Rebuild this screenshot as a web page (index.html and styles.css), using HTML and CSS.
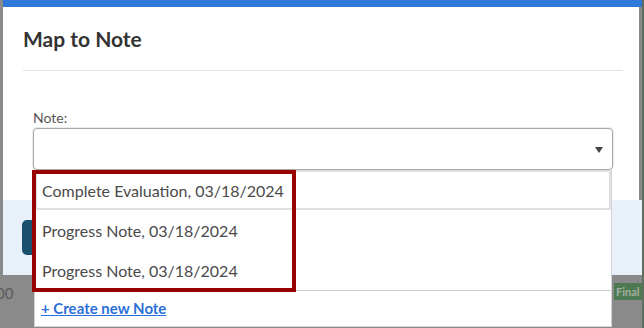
FILE: index.html
```html
<!DOCTYPE html>
<html>
<head>
<meta charset="utf-8">
<link rel="stylesheet" href="styles.css">
</head>
<body>
<div class="page">
  <div class="modal">
    <div class="topbar"></div>
    <div class="header"><h2 class="title">Map to Note</h2></div>
    <div class="content">
      <label class="label">Note:</label>
      <div class="select-wrap">
        <div class="select"><span class="arrow"></span></div>
        <div class="dropdown">
          <ul class="options">
            <li class="option active">Complete Evaluation, 03/18/2024</li>
            <li class="option">Progress Note, 03/18/2024</li>
            <li class="option">Progress Note, 03/18/2024</li>
          </ul>
          <div class="create"><a class="create-link" href="#">+ Create new Note</a></div>
          <div class="callout"></div>
        </div>
      </div>
    </div>
    <div class="footer"><span class="btn"></span></div>
  </div>
  <span class="bg-text">00</span>
  <span class="bg-badge">Final</span>
</div>
</body>
</html>
```

FILE: styles.css
```css
* { box-sizing: border-box; }
html, body { margin: 0; padding: 0; }
body {
  width: 644px;
  height: 328px;
  overflow: hidden;
  background: #8a8a8a;
  font-family: Lato, "Open Sans", sans-serif;
}
.page {
  position: relative;
  display: flex;
  height: 328px;
  padding-left: 3px;
  border-right: 2px solid #5f6f5f;
}
.modal {
  width: 636px;
  height: 275px;
  background: #fff;
  display: flex;
  flex-direction: column;
}
.topbar {
  height: 7px;
  background: #2f77d8;
  margin-right: -3px;
}
.header {
  margin: 0 16px 0 20px;
  padding: 19px 0 19px;
  border-bottom: 1px solid #e3e3e3;
}
.title {
  margin: 0;
  font-size: 21px;
  line-height: 25px;
  font-weight: 700;
  color: #333;
}
.content {
  padding: 38px 26px 30px 30px;
}
.label {
  display: block;
  font-size: 14px;
  line-height: 17px;
  color: #555;
  margin-bottom: 2px;
}
.select-wrap {
  position: relative;
  z-index: 2;
}
.select {
  height: 42px;
  border: 1px solid #a8a8a8;
  border-radius: 4px;
  box-shadow: 0 0 0 1px #ececec;
  display: flex;
  align-items: center;
  justify-content: flex-end;
  padding-right: 9px;
  background: #fff;
}
.arrow {
  width: 0;
  height: 0;
  border-left: 4px solid transparent;
  border-right: 4px solid transparent;
  border-top: 6px solid #444;
  margin-top: 2px;
}
.dropdown {
  position: absolute;
  top: 100%;
  left: 1px;
  right: 1px;
  height: 157px;
  background: #fff;
  border: 1px solid #d4d4d4;
  border-top: none;
}
.options {
  list-style: none;
  margin: 0;
  padding: 0;
}
.option {
  height: 40px;
  display: flex;
  align-items: center;
  padding-left: 5px;
  border: 2px solid transparent;
  font-size: 16px;
  line-height: 19px;
  color: #4a4a4a;
}
.option.active {
  border-color: #e0e0e0;
}
.create {
  border-top: 1px solid #cfcfcf;
  padding: 8px 6px;
  font-size: 15px;
  line-height: 18px;
}
.create-link {
  color: #2c6fd8;
  font-weight: 700;
  text-decoration: underline;
}
.callout {
  position: absolute;
  left: -3px;
  top: 0;
  width: 264px;
  height: 122px;
  border: 4px solid #990000;
  pointer-events: none;
}
.footer {
  margin-top: auto;
  height: 75px;
  margin-right: -3px;
  background: #e8f0f9;
  padding: 20px 0 0 19px;
}
.btn {
  display: block;
  width: 90px;
  height: 35px;
  border-radius: 5px;
  background: #194f6d;
}
.bg-text {
  position: absolute;
  left: -4px;
  top: 284px;
  font-size: 15px;
  color: #5a5a5a;
}
.bg-badge {
  position: absolute;
  left: 614px;
  top: 283px;
  width: 28px;
  height: 17px;
  background: #4d7a50;
  color: #a3aea3;
  font-size: 11px;
  font-weight: 700;
  line-height: 17px;
  padding-left: 2px;
}
```
